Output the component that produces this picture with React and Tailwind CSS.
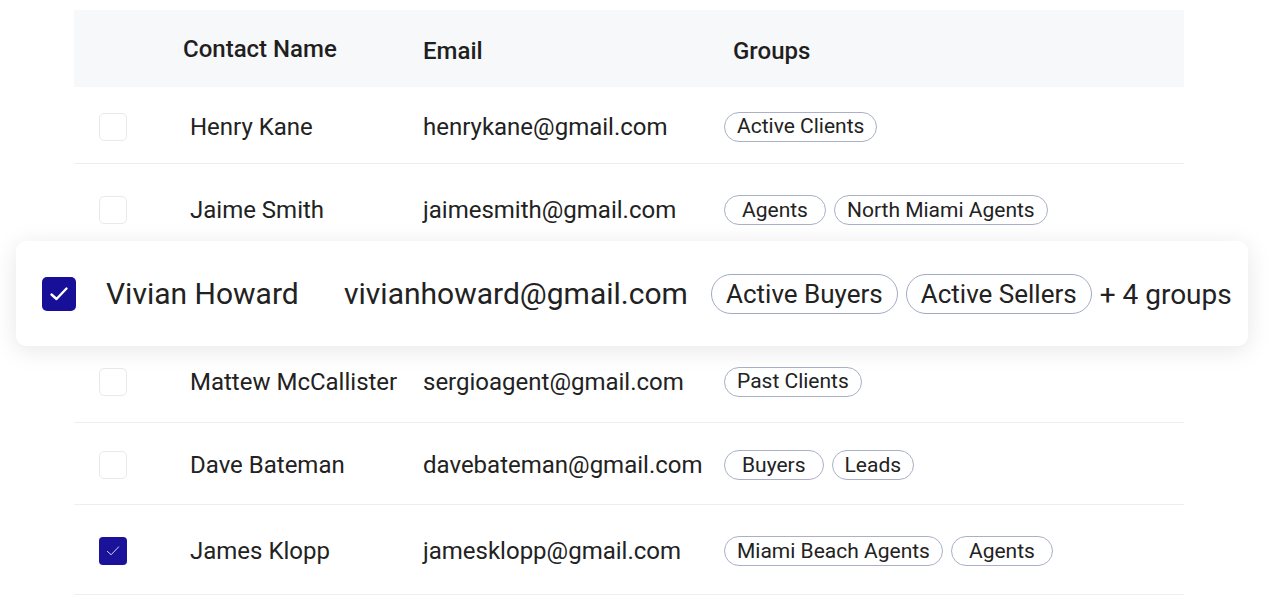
const rows = [
  { name: "Henry Kane", email: "henrykane@gmail.com", groups: ["Active Clients"], h: "h-[77px]" },
  { name: "Jaime Smith", email: "jaimesmith@gmail.com", groups: ["Agents", "North Miami Agents"], h: "h-[90px]" },
  { name: "Vivian Howard", email: "vivianhoward@gmail.com", groups: ["Active Buyers", "Active Sellers"], h: "h-[84px]", floating: true },
  { name: "Mattew McCallister", email: "sergioagent@gmail.com", groups: ["Past Clients"], h: "h-[85px]" },
  { name: "Dave Bateman", email: "davebateman@gmail.com", groups: ["Buyers", "Leads"], h: "h-[82px]" },
  { name: "James Klopp", email: "jamesklopp@gmail.com", groups: ["Miami Beach Agents", "Agents"], h: "h-[90px]", checked: true },
]

const widePills = ["Agents", "Buyers"]

function Checkbox({ checked, big }) {
  if (checked) {
    return (
      <div
        className={
          big
            ? "w-[34px] h-[34px] rounded-[5px] bg-[#180f98] flex items-center justify-center"
            : "w-[28px] h-[28px] rounded-[4px] bg-[#1a1299] flex items-center justify-center"
        }
      >
        <svg viewBox="0 0 24 24" className={big ? "w-[24px] h-[24px]" : "w-[18px] h-[18px]"} fill="none">
          <polyline
            points="4.5,12.5 9.5,17 19.5,6.5"
            stroke="white"
            strokeWidth={big ? 2.4 : 1.1}
            strokeLinecap="round"
            strokeLinejoin="round"
          />
        </svg>
      </div>
    )
  }
  return <div className="w-[28px] h-[28px] rounded-[5px] border border-[#e8e9ed] bg-white" />
}

function Chip({ label, big }) {
  if (big) {
    return (
      <span className="h-[40px] px-[14px] rounded-full border border-[#a3aac6] text-[26px] leading-none flex items-center text-[#222]">
        {label}
      </span>
    )
  }
  return (
    <span
      className={`h-[30px] ${widePills.includes(label) ? "px-[17px]" : "px-[12px]"} rounded-full border border-[#a9b0c8] text-[21px] leading-none flex items-center text-[#222]`}
    >
      {label}
    </span>
  )
}

export default function App() {
  return (
    <div className="w-[1272px] h-[598px] bg-white overflow-hidden pt-[10px] pl-[74px]" style={{ fontFamily: "Roboto, 'Noto Sans', sans-serif" }}>
      <div className="w-[1110px]">
        {/* Header */}
        <div className="h-[77px] bg-[#f7f8fa] flex items-center text-[24px] font-medium text-[#1f1f1f]">
          <div className="w-[109px]" />
          <div className="w-[240px]">Contact Name</div>
          <div className="w-[310px] pt-[4px]">Email</div>
          <div className="flex-1 pt-[4px]">Groups</div>
        </div>

        {rows.map((row) =>
          row.floating ? (
            <div key={row.name} className={`relative ${row.h}`}>
              <div className="absolute -left-[58px] -top-[13px] w-[1232px] h-[105px] bg-white rounded-[10px] shadow-[0_4px_24px_rgba(20,24,40,0.10)] flex items-center text-[#222]">
                <div className="w-[90px] pl-[26px]">
                  <Checkbox checked big />
                </div>
                <div className="w-[238px] text-[30px]">{row.name}</div>
                <div className="w-[367px] text-[30px]">{row.email}</div>
                <div className="flex items-center gap-[8px]">
                  {row.groups.map((g) => (
                    <Chip key={g} label={g} big />
                  ))}
                  <span className="text-[28px] mt-[2px]">+ 4 groups</span>
                </div>
              </div>
            </div>
          ) : (
            <div key={row.name} className={`${row.h} pt-[3px] flex items-center border-b border-[#eceef2] text-[#222]`}>
              <div className="w-[116px] pl-[25px]">
                <Checkbox checked={row.checked} />
              </div>
              <div className="w-[233px] text-[24px]">{row.name}</div>
              <div className="w-[301px] text-[24px]">{row.email}</div>
              <div className="flex items-center gap-[8px]">
                {row.groups.map((g) => (
                  <Chip key={g} label={g} />
                ))}
              </div>
            </div>
          )
        )}
      </div>
    </div>
  )
}
